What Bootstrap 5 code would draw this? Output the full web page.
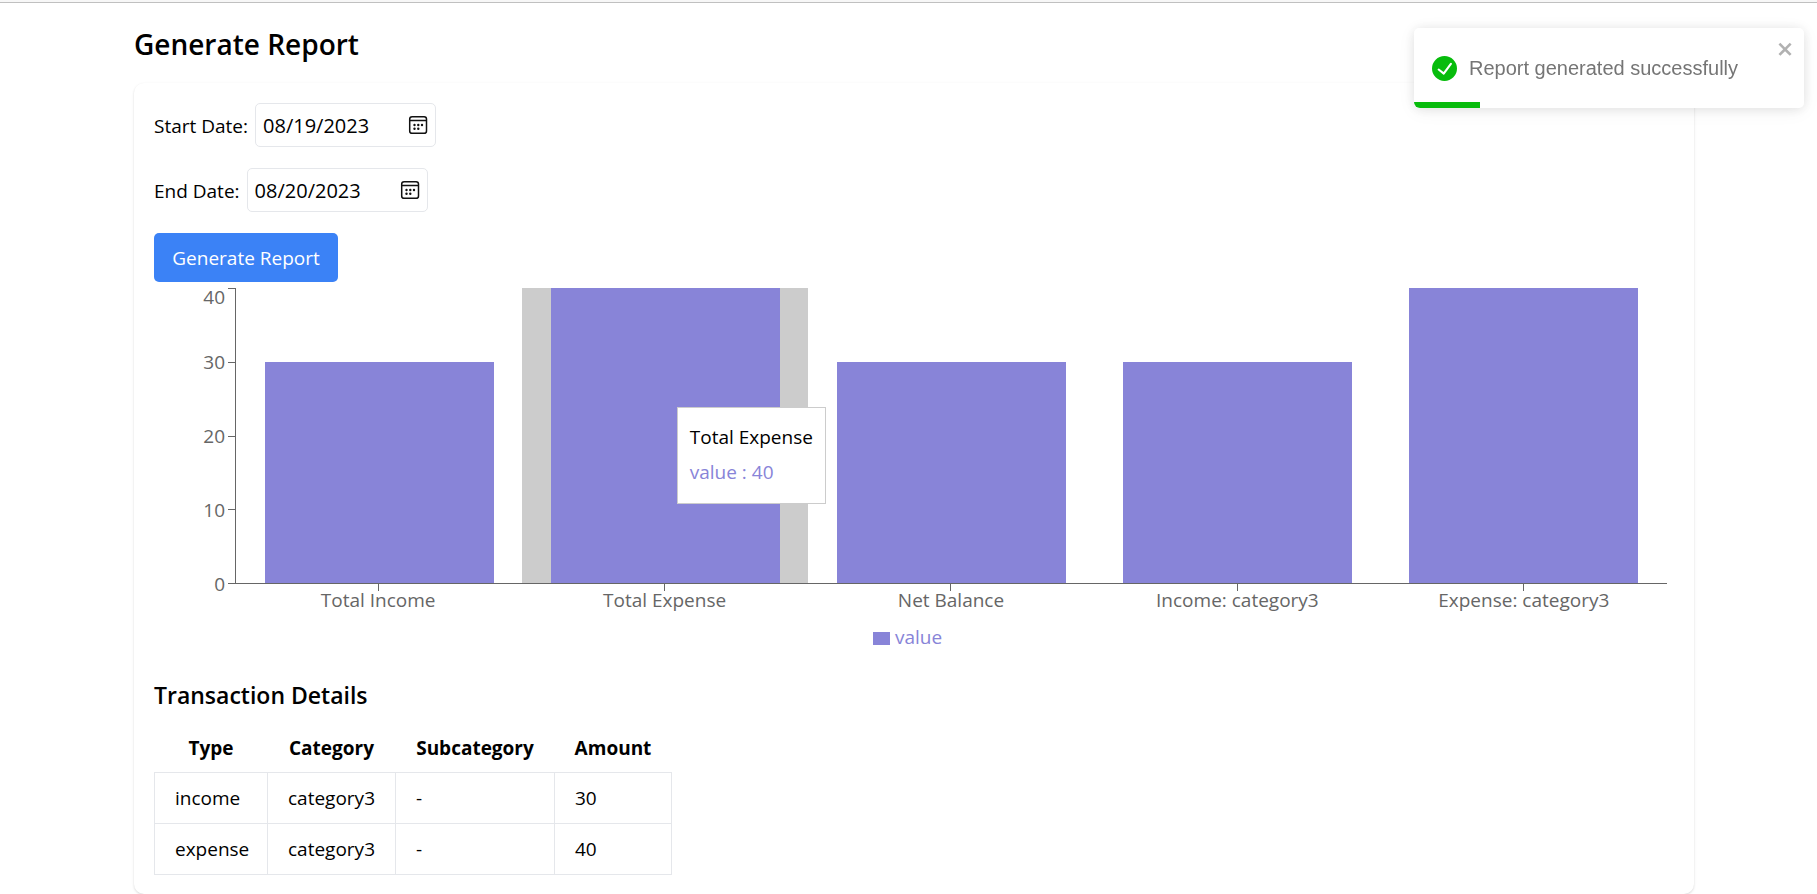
<!DOCTYPE html>
<html lang="en">
<head>
<meta charset="utf-8">
<meta name="viewport" content="width=device-width, initial-scale=1">
<title>Generate Report</title>
<link rel="stylesheet" href="https://cdn.jsdelivr.net/npm/bootstrap@5.3.0/dist/css/bootstrap.min.css">
<style>
  body { font-family: "Segoe UI", "Open Sans", sans-serif; font-size: 19px; line-height: 30px; color: #000; background: #fff; }
  .top-edge { height: 3px; background: #f7f7f7; border-bottom: 1px solid #c0c0c0; }
  .page { padding: 21px 123px 0 134px; }
  .page-title { font-size: 28px; line-height: 40px; font-weight: 600; margin-bottom: 19px; }
  .report-card { border: 0; border-radius: 10px; padding: 20px 20px 19px; box-shadow: 0 1px 3px rgba(0,0,0,.1), 0 1px 2px rgba(0,0,0,.06); color: #000; }

  .date-row { margin-bottom: 21px; gap: 7px; }
  .date-row label { padding-top: 2px; }
  .date-box { width: 181px; height: 44px; padding: 2px 7px 0; border: 1px solid #e5e7eb; border-radius: 5px; background: #fff; color: #000; font-size: 20px; }
  .date-box::-webkit-calendar-picker-indicator {
    width: 20px; height: 20px; padding: 0; margin: 0 0 3px; opacity: 1; background-size: 20px 20px;
    background-image: url("data:image/svg+xml,%3Csvg xmlns='http://www.w3.org/2000/svg' viewBox='0 0 20 20'%3E%3Crect x='1.7' y='1.7' width='16.8' height='16.6' rx='2.4' fill='none' stroke='%23111' stroke-width='1.5'/%3E%3Cpath d='M2 5.6h16.2' stroke='%23111' stroke-width='1.5'/%3E%3Cg fill='%23111'%3E%3Ccircle cx='6.5' cy='10' r='1.2'/%3E%3Ccircle cx='10.3' cy='10' r='1.2'/%3E%3Ccircle cx='14' cy='10' r='1.2'/%3E%3Ccircle cx='6.5' cy='13.8' r='1.2'/%3E%3Ccircle cx='10.3' cy='13.8' r='1.2'/%3E%3C/g%3E%3C/svg%3E");
  }
  .btn-report { --bs-btn-bg: #3b82f6; --bs-btn-color: #fff; --bs-btn-hover-bg: #2563eb; --bs-btn-hover-color: #fff; border: 0; border-radius: 5px; padding: 10px 0 9px; width: 184px; height: 49px; font-size: 19px; line-height: 30px; }

  .chart { padding: 6px 7px 0 0; color: #666; }
  .y-axis { width: 81px; height: 296px; }
  .y-tick { height: 1px; gap: 3px; }
  .y-tick::after { content: ""; width: 7px; height: 1px; background: #666; }
  .y-tick .first-label { margin-top: 16px; }
  .bands { display: grid; grid-template-columns: repeat(5, minmax(0, 1fr)); }
  .plot { height: 296px; border-left: 1px solid #666; border-bottom: 1px solid #666; }
  .band-hover { background: #ccc; }
  .bar-value { width: 80%; background: #8884d8; }
  .chart-tip { left: 54%; top: 119px; z-index: 2; padding: 12px; border: 1px solid #ccc; background: #fff; color: #000; height: 97px; }
  .chart-tip p { margin: 2px 0 5px; line-height: 30px; }
  .series-text { color: #8884d8; }
  .x-axis { margin-left: 81px; }
  .x-axis span::before { content: ""; display: block; width: 1px; height: 7px; margin: 0 auto -6px; background: #666; }
  .legend { padding: 7px 12px 0 6px; gap: 5px; }
  .swatch { width: 17px; height: 13px; background: #8884d8; margin-top: 3px; }

  .section-title { font-size: 23px; line-height: 35px; font-weight: 600; margin: 26px 0 8px; }
  .tx-table { width: 517px; table-layout: fixed; border-collapse: collapse; }
  .tx-table th { height: 51px; padding: 12px 0 8px; text-align: center; font-weight: 700; }
  .tx-table td { height: 51px; padding: 10px 0 10px 20px; border: 1px solid #e5e7eb; white-space: nowrap; }

  .report-toast { top: 28px; right: 13px; width: 390px; height: 80px; z-index: 10; border-radius: 5px; background: #fff; color: #757575; padding-left: 18px; gap: 12px; font-family: Arial, "Liberation Sans", sans-serif; font-size: 20px; box-shadow: 0 1px 12px rgba(0,0,0,.1), 0 3px 19px rgba(0,0,0,.05); }
  .toast-x { top: 9px; right: 9px; opacity: .3; line-height: 1; }
  .toast-time { width: 66px; height: 6px; background: #07bc0c; }
</style>
</head>
<body>
<div class="top-edge"></div>

<main class="page">
  <h1 class="page-title">Generate Report</h1>
  <section class="card report-card">
    <div class="date-row d-flex align-items-center">
      <label for="start">Start Date:</label>
      <input class="date-box" type="date" id="start" value="2023-08-19">
    </div>
    <div class="date-row d-flex align-items-center">
      <label for="end">End Date:</label>
      <input class="date-box" type="date" id="end" value="2023-08-20">
    </div>
    <button class="btn btn-report" type="button">Generate Report</button>

    <div class="chart">
      <div class="d-flex">
        <div class="y-axis d-flex flex-column justify-content-between">
          <div class="y-tick d-flex align-items-center justify-content-end"><span class="first-label">40</span></div>
          <div class="y-tick d-flex align-items-center justify-content-end"><span>30</span></div>
          <div class="y-tick d-flex align-items-center justify-content-end"><span>20</span></div>
          <div class="y-tick d-flex align-items-center justify-content-end"><span>10</span></div>
          <div class="y-tick d-flex align-items-center justify-content-end"><span>0</span></div>
        </div>
        <div class="plot bands flex-grow-1">
          <div class="d-flex align-items-end justify-content-center"><div class="bar-value" style="height:75%"></div></div>
          <div class="band-hover position-relative d-flex align-items-end justify-content-center">
            <div class="bar-value" style="height:100%"></div>
            <div class="chart-tip position-absolute text-nowrap">
              <p>Total Expense</p>
              <p class="series-text">value : 40</p>
            </div>
          </div>
          <div class="d-flex align-items-end justify-content-center"><div class="bar-value" style="height:75%"></div></div>
          <div class="d-flex align-items-end justify-content-center"><div class="bar-value" style="height:75%"></div></div>
          <div class="d-flex align-items-end justify-content-center"><div class="bar-value" style="height:100%"></div></div>
        </div>
      </div>
      <div class="x-axis bands text-center">
        <span>Total Income</span>
        <span>Total Expense</span>
        <span>Net Balance</span>
        <span>Income: category3</span>
        <span>Expense: category3</span>
      </div>
      <div class="legend d-flex justify-content-center align-items-center series-text">
        <span class="swatch"></span><span>value</span>
      </div>
    </div>

    <h2 class="section-title">Transaction Details</h2>
    <table class="tx-table">
      <colgroup><col style="width:113px"><col style="width:128px"><col style="width:159px"><col style="width:117px"></colgroup>
      <thead><tr><th>Type</th><th>Category</th><th>Subcategory</th><th>Amount</th></tr></thead>
      <tbody>
        <tr><td>income</td><td>category3</td><td>-</td><td>30</td></tr>
        <tr><td>expense</td><td>category3</td><td>-</td><td>40</td></tr>
      </tbody>
    </table>
  </section>
</main>

<div class="report-toast position-fixed d-flex align-items-center overflow-visible" role="alert">
  <svg width="25" height="25" viewBox="0 0 24 24" fill="#07bc0c" aria-hidden="true"><path d="M12 0a12 12 0 1012 12A12.014 12.014 0 0012 0zm6.927 8.2l-6.845 9.289a1.011 1.011 0 01-1.43.188l-4.888-3.908a1 1 0 111.25-1.562l4.076 3.261 6.227-8.451a1 1 0 111.61 1.183z"/></svg>
  <span>Report generated successfully</span>
  <button class="toast-x position-absolute border-0 bg-transparent p-0" type="button" aria-label="Close">
    <svg width="18" height="20" viewBox="0 0 14 16" aria-hidden="true"><path fill-rule="evenodd" d="M7.71 8.23l3.75 3.75-1.48 1.48-3.75-3.75-3.75 3.75L1 11.98l3.75-3.75L1 4.48 2.48 3l3.75 3.75L9.98 3l1.48 1.48-3.75 3.75z"/></svg>
  </button>
  <div class="position-absolute bottom-0 start-0 w-100 overflow-hidden rounded-bottom"><div class="toast-time"></div></div>
</div>
<script src="https://cdn.jsdelivr.net/npm/bootstrap@5.3.0/dist/js/bootstrap.bundle.min.js"></script>
</body>
</html>
